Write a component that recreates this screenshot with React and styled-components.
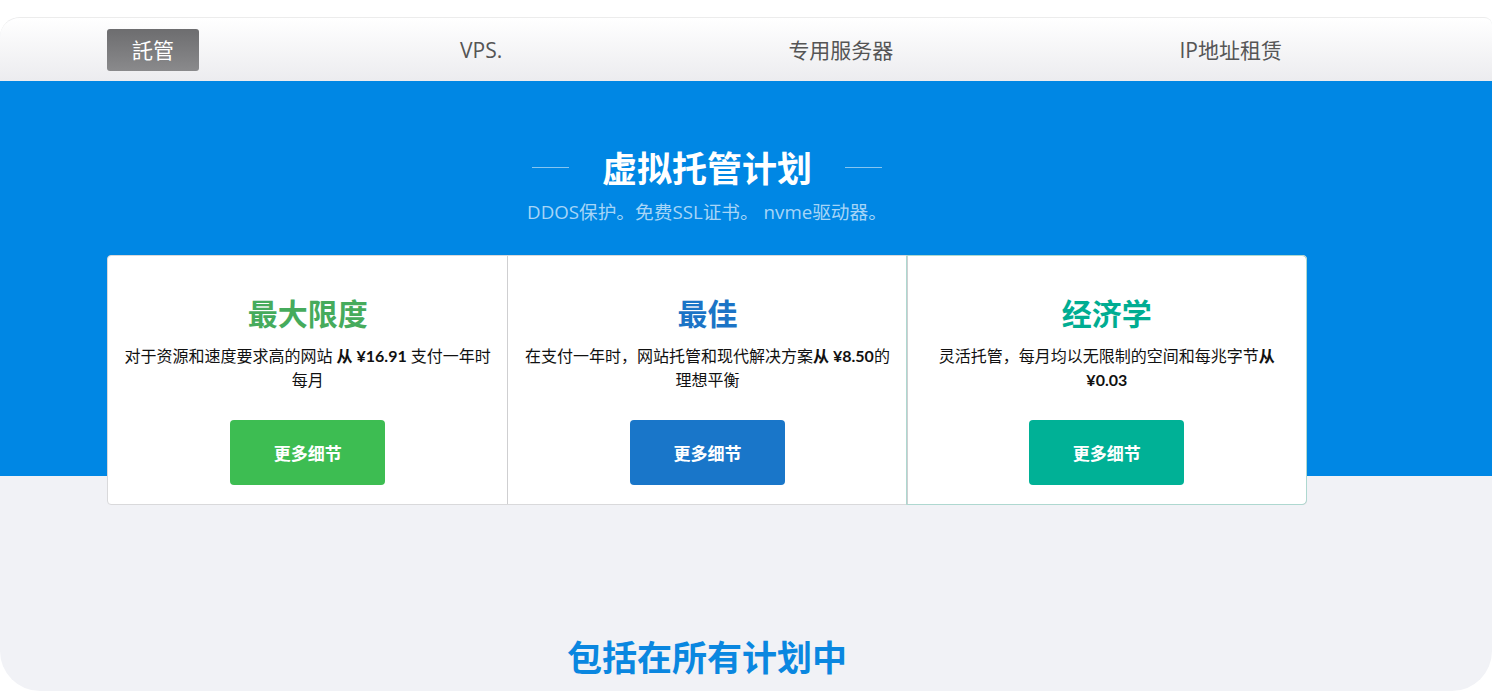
import React from 'react';
import styled, { createGlobalStyle } from 'styled-components';

const GlobalStyle = createGlobalStyle`
  html, body {
    margin: 0;
    padding: 0;
    background: #fff;
    font-family: Lato, "Noto Sans CJK SC", sans-serif;
  }
`

const Page = styled.div`
  padding-top: 17px;
  background: #fff;
`

const Shell = styled.div`
  border-top: 1px solid #ececec;
  border-radius: 20px 8px 40px 40px;
  overflow: hidden;
  background: #f1f2f6;
  height: 673px;
`

const NavBar = styled.nav`
  height: 63px;
  background: linear-gradient(to bottom, #ffffff, #ececef);
  display: flex;
  align-items: center;
`

const Inner = styled.div`
  width: 1200px;
  margin-left: 107px;
`

const NavInner = styled(Inner)`
  display: flex;
  justify-content: space-between;
  align-items: center;
`

const NavItem = styled.a`
  display: block;
  padding: 0 25px;
  height: 42px;
  line-height: 42px;
  border-radius: 3px;
  font-family: "Open Sans", "Noto Sans CJK SC", sans-serif;
  font-size: 21px;
  color: ${p => (p.$active ? '#fff' : '#555')};
  background: ${p => (p.$active ? 'linear-gradient(to bottom, #6d6d6f, #8a8a8c)' : 'transparent')};
`

const Hero = styled.section`
  background: linear-gradient(to bottom, #0087e4 0, #0087e4 395px, #f1f2f6 395px);
  padding-top: 62px;
`

const TitleRow = styled.div`
  display: flex;
  justify-content: center;
  align-items: center;
  gap: 33px;
`

const Rule = styled.span`
  width: 37px;
  height: 1px;
  background: #86c5f0;
`

const HeroTitle = styled.h1`
  margin: 0;
  font-size: 35px;
  line-height: 48px;
  font-weight: 700;
  color: #fff;
  font-family: "Noto Sans CJK SC", sans-serif;
`

const HeroSub = styled.p`
  margin: 9px 0 0;
  text-align: center;
  font-size: 18.7px;
  line-height: 24px;
  color: #a6d5f7;
  font-family: "Open Sans", "Noto Sans CJK SC", sans-serif;
`

const Cards = styled(Inner)`
  margin-top: 31px;
  display: grid;
  grid-template-columns: repeat(3, 1fr);
  background: #fff;
  border: 1px solid #d9d9db;
  border-radius: 4px;
  box-sizing: border-box;
  height: 250px;
`

const Card = styled.div`
  display: flex;
  flex-direction: column;
  align-items: center;
  padding: 36px 10px 0;
  border-left: ${p => (p.$first ? 'none' : '1px solid #cfcfd1')};
  border-radius: ${p => (p.$last ? '0 4px 4px 0' : '0')};
  ${p => p.$last && 'outline: 1px solid #aed8d0;'}
`

const CardTitle = styled.h2`
  margin: 0;
  font-size: 30px;
  line-height: 40px;
  font-weight: 700;
  color: ${p => p.$color};
  font-family: "Noto Sans CJK SC", sans-serif;
`

const CardText = styled.p`
  margin: 12px 0 0;
  font-size: 16px;
  line-height: 24px;
  color: #111;
  text-align: center;
  height: 48px;

  b {
    font-weight: 700;
  }
`

const Button = styled.a`
  margin-top: 28px;
  width: 155px;
  height: 65px;
  border-radius: 4px;
  background: ${p => p.$color};
  color: #fff;
  font-size: 17px;
  font-weight: 700;
  display: flex;
  align-items: center;
  justify-content: center;
  font-family: Lato, "Noto Sans CJK SC", sans-serif;
`

const Included = styled(Inner)`
  margin-top: 126px;
  text-align: center;
  font-size: 35px;
  line-height: 50px;
  font-weight: 700;
  color: #0a87e0;
  font-family: "Noto Sans CJK SC", sans-serif;
`

const plans = [
  {
    title: '最大限度',
    color: '#46ab5c',
    btn: '#3dbd52',
    text: <>对于资源和速度要求高的网站 <b>从 ¥16.91</b> 支付一年时<br />每月</>,
  },
  {
    title: '最佳',
    color: '#1b74c6',
    btn: '#1976c9',
    text: <>在支付一年时，网站托管和现代解决方案<b>从 ¥8.50</b>的<br />理想平衡</>,
  },
  {
    title: '经济学',
    color: '#00ad92',
    btn: '#00b196',
    text: <>灵活托管，每月均以无限制的空间和每兆字节<b>从</b><br /><b>¥0.03</b></>,
  },
];

function App() {
  return (
    <Page>
      <GlobalStyle />
      <Shell>
        <NavBar>
          <NavInner>
            <NavItem $active>託管</NavItem>
            <NavItem>VPS.</NavItem>
            <NavItem>专用服务器</NavItem>
            <NavItem>IP地址租赁</NavItem>
          </NavInner>
        </NavBar>
        <Hero>
          <Inner>
            <TitleRow>
              <Rule />
              <HeroTitle>虚拟托管计划</HeroTitle>
              <Rule />
            </TitleRow>
            <HeroSub>DDOS保护。免费SSL证书。 nvme驱动器。</HeroSub>
          </Inner>
          <Cards>
            {plans.map((p, i) => (
              <Card key={p.title} $first={i === 0} $last={i === plans.length - 1}>
                <CardTitle $color={p.color}>{p.title}</CardTitle>
                <CardText>{p.text}</CardText>
                <Button $color={p.btn}>更多细节</Button>
              </Card>
            ))}
          </Cards>
        </Hero>
        <Included as="h2">包括在所有计划中</Included>
      </Shell>
    </Page>
  );
}

export default App;
